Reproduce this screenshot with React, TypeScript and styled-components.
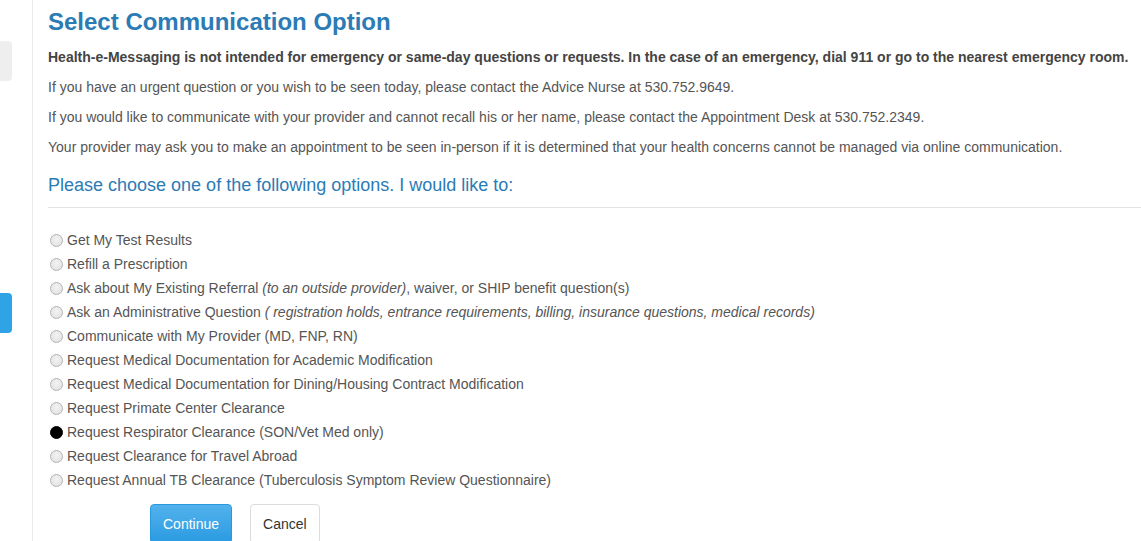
import React, { useState } from 'react';
import styled, { createGlobalStyle } from 'styled-components';

const GlobalStyle = createGlobalStyle`
  html, body {
    margin: 0;
    padding: 0;
    background: #fff;
    font-family: "Liberation Sans", Arial, sans-serif;
    color: #555;
    overflow: hidden;
  }
`;

const Page = styled.div`
  display: flex;
  width: 1141px;
  height: 541px;
  overflow: hidden;
`;

const Sidebar = styled.div`
  width: 32px;
  flex-shrink: 0;
  border-right: 1px solid #eaeaea;
  display: flex;
  flex-direction: column;
  padding-top: 41px;
`;

const SideTab = styled.div<{ active?: boolean }>`
  width: 12px;
  height: 40px;
  border-radius: 0 4px 4px 0;
  background: ${({ active }) => (active ? '#2ea3e6' : '#eeeeee')};
  margin-bottom: ${({ active }) => (active ? '0' : '212px')};
`;

const Main = styled.main`
  flex: 1;
  padding: 7px 0 0 15px;
`;

const Title = styled.h1`
  margin: 0 0 11px;
  font-size: 24px;
  line-height: 30px;
  font-weight: bold;
  color: #2b7bb5;
`;

const Para = styled.p<{ strong?: boolean }>`
  margin: 0 0 12px;
  font-size: 14px;
  line-height: 18px;
  font-weight: ${({ strong }) => (strong ? 'bold' : 'normal')};
  color: ${({ strong }) => (strong ? '#444' : '#555')};
`;

const SubTitle = styled.h2`
  margin: 18px 0 0;
  font-size: 18px;
  line-height: 22px;
  font-weight: normal;
  color: #2b7bb5;
`;

const Divider = styled.hr`
  border: 0;
  border-top: 1px solid #e2e2e2;
  margin: 11px 0 20px;
`;

const Options = styled.div`
  display: flex;
  flex-direction: column;
`;

const Option = styled.label`
  display: flex;
  align-items: center;
  height: 24px;
  font-size: 14px;
  color: #555;
  cursor: pointer;
  padding-left: 2px;
  white-space: pre;
`;

const Radio = styled.span<{ checked: boolean }>`
  width: 13px;
  height: 13px;
  border-radius: 50%;
  margin-right: 4px;
  box-sizing: border-box;
  flex-shrink: 0;
  ${({ checked }) =>
    checked
      ? 'background: #000; border: 1px solid #000;'
      : 'background: radial-gradient(circle at 50% 40%, #f2f2f2 0%, #e0e0e0 100%); border: 1px solid #b4b4b4;'}
`;

const Note = styled.i``;

const Actions = styled.div`
  display: flex;
  gap: 18px;
  margin: 12px 0 0 102px;
`;

const Button = styled.button<{ primary?: boolean }>`
  font-family: "Liberation Sans", Arial, sans-serif;
  font-size: 14px;
  height: 40px;
  padding: 0 12px;
  border-radius: 4px;
  cursor: pointer;
  ${({ primary }) =>
    primary
      ? 'color: #fff; border: 1px solid #2a98de; background: linear-gradient(#52b2ec, #2a9ae1);'
      : 'color: #333; border: 1px solid #dcdcdc; background: #fff;'}
`;

const options: { label: string; note?: string; after?: string }[] = [
  { label: 'Get My Test Results' },
  { label: 'Refill a Prescription' },
  { label: 'Ask about My Existing Referral ', note: '(to an outside provider)', after: ', waiver, or SHIP benefit question(s)' },
  { label: 'Ask an Administrative Question ', note: '( registration holds, entrance requirements, billing, insurance questions, medical records)' },
  { label: 'Communicate with My Provider (MD, FNP, RN)' },
  { label: 'Request Medical Documentation for Academic Modification' },
  { label: 'Request Medical Documentation for Dining/Housing Contract Modification' },
  { label: 'Request Primate Center Clearance' },
  { label: 'Request Respirator Clearance (SON/Vet Med only)' },
  { label: 'Request Clearance for Travel Abroad' },
  { label: 'Request Annual TB Clearance (Tuberculosis Symptom Review Questionnaire)' },
];

export default function App() {
  const [selected, setSelected] = useState(8);

  return (
    <>
      <GlobalStyle />
      <Page>
        <Sidebar>
          <SideTab />
          <SideTab active />
        </Sidebar>
        <Main>
          <Title>Select Communication Option</Title>
          <Para strong>
            Health-e-Messaging is not intended for emergency or same-day questions or requests. In the case of an emergency, dial 911 or go to the nearest emergency room.
          </Para>
          <Para>If you have an urgent question or you wish to be seen today, please contact the Advice Nurse at 530.752.9649.</Para>
          <Para>If you would like to communicate with your provider and cannot recall his or her name, please contact the Appointment Desk at 530.752.2349.</Para>
          <Para>Your provider may ask you to make an appointment to be seen in-person if it is determined that your health concerns cannot be managed via online communication.</Para>
          <SubTitle>Please choose one of the following options. I would like to:</SubTitle>
          <Divider />
          <Options>
            {options.map((o, i) => (
              <Option key={o.label} onClick={() => setSelected(i)}>
                <Radio checked={selected === i} />
                {o.label}
                {o.note && <Note>{o.note}</Note>}
                {o.after}
              </Option>
            ))}
          </Options>
          <Actions>
            <Button primary>Continue</Button>
            <Button>Cancel</Button>
          </Actions>
        </Main>
      </Page>
    </>
  );
}
